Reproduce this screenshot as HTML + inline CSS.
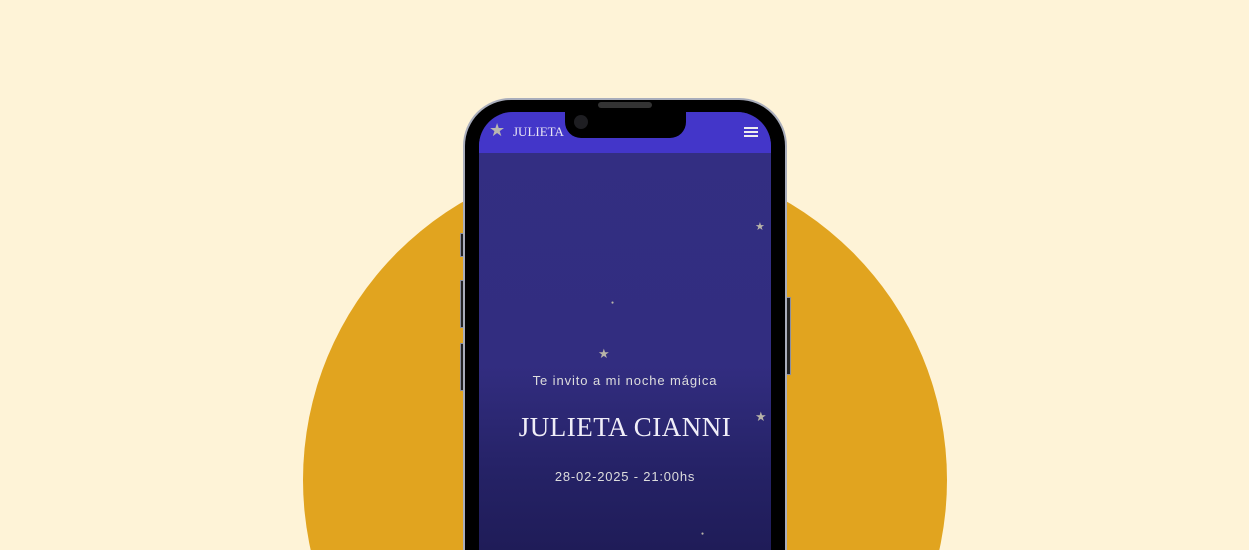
<!DOCTYPE html>
<html style="width:1249px;height:550px;overflow:hidden"><head><style>
body{margin:0;width:1249px;height:550px;overflow:hidden;font-family:"Liberation Sans",sans-serif}
.wrap{position:relative;width:1249px;height:550px;overflow:hidden;background:#fef3d7}
.phone{position:absolute;left:463px;top:98px;width:324px;height:452px;border-radius:48px 48px 0 0;background:#000;border:2px solid #a9adbb;border-bottom:none;box-sizing:border-box}
.screen{position:absolute;left:479px;top:112px;width:292px;height:438px;border-radius:34px 34px 0 0;overflow:hidden;background:linear-gradient(#332e82 0%,#322d80 58%,#252266 82%,#1f1c58 100%)}
.hdr{position:absolute;left:0;top:0;width:292px;height:41px;background:#4336c9}
.notch{position:absolute;left:565px;top:100px;width:121px;height:38px;background:#000;border-radius:0 0 16px 16px}
.cam{position:absolute;left:574px;top:115px;width:14px;height:14px;border-radius:50%;background:#1e1e22}
.spk{position:absolute;left:598px;top:102px;width:54px;height:6px;border-radius:3px;background:#333}
.t{position:absolute;color:#ddd;text-align:center;width:292px;left:0}
.star{position:absolute;color:#b8b4a8}
.btn{position:absolute;background:#222;border:1px solid #8a8ea0}
</style></head><body><div class="wrap">
<svg width="1249" height="550" style="position:absolute;left:0;top:0"><circle cx="625" cy="480" r="322" fill="#e1a41f"/></svg>
<div class="btn" style="left:460px;top:233px;width:3px;height:22px"></div>
<div class="btn" style="left:460px;top:280px;width:3px;height:46px"></div>
<div class="btn" style="left:460px;top:343px;width:3px;height:46px"></div>
<div class="btn" style="left:786px;top:297px;width:3px;height:76px"></div>
<div class="phone"></div>
<div class="screen">
<div class="hdr">
<span style="position:absolute;left:10px;top:8px;color:#b9b6b0;font-size:18px">★</span>
<span style="position:absolute;left:34px;top:12px;color:#e8e6f4;font-family:'Liberation Serif',serif;font-size:13px">JULIETA</span>
<div style="position:absolute;left:265px;top:15px;width:14px;height:2px;background:#eee;box-shadow:0 4px 0 #eee,0 8px 0 #eee"></div>
</div>
<span class="star" style="left:276px;top:108px;font-size:11px">★</span>
<span class="star" style="left:132px;top:188px;font-size:5px">●</span>
<span class="star" style="left:119px;top:234px;font-size:13px">★</span>
<span class="star" style="left:276px;top:297px;font-size:13px">★</span>
<span class="star" style="left:222px;top:419px;font-size:5px">●</span>
<div class="t" style="top:261px;font-size:13px;letter-spacing:0.9px">Te invito a mi noche mágica</div>
<div class="t" style="top:300px;font-size:27px;font-family:'Liberation Serif',serif;color:#f0eef8;letter-spacing:0.5px">JULIETA CIANNI</div>
<div class="t" style="top:357px;font-size:13px;letter-spacing:0.8px">28-02-2025 - 21:00hs</div>
</div>
<div class="notch"></div>
<div class="cam"></div>
<div class="spk"></div>
</div></body></html>
